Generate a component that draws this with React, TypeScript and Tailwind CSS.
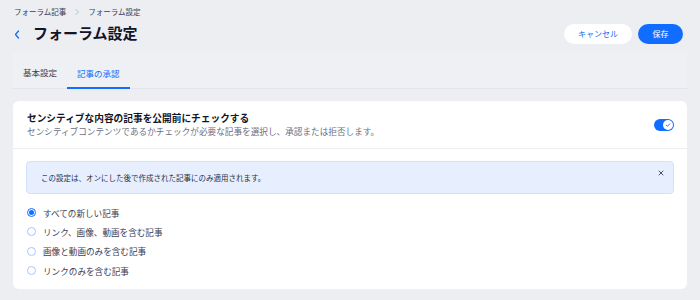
import React from 'react';

const options = [
  { label: 'すべての新しい記事', checked: true },
  { label: 'リンク、画像、動画を含む記事', checked: false },
  { label: '画像と動画のみを含む記事', checked: false },
  { label: 'リンクのみを含む記事', checked: false },
];

export default function App() {
  return (
    <div
      className="w-[700px] h-[300px] overflow-hidden bg-[#eceef2] text-[#1b2036]"
      style={{ fontFamily: '"Noto Sans CJK JP", "Noto Sans", sans-serif' }}
    >
      {/* breadcrumb */}
      <div className="flex items-center h-[10px] mt-[7px] pl-[14px] text-[7.5px] leading-[10px] text-[#3b4057]">
        <span>フォーラム記事</span>
        <svg width="6" height="8" viewBox="0 0 6 8" className="mx-[8px]">
          <path d="M1.5 1 L4.5 4 L1.5 7" fill="none" stroke="#b6bac6" strokeWidth="0.9" />
        </svg>
        <span>フォーラム設定</span>
      </div>

      {/* title row */}
      <div className="flex items-center justify-between h-[20px] mt-[7px] pl-[14px] pr-[17px]">
        <div className="flex items-center">
          <svg width="6" height="9" viewBox="0 0 6 9">
            <path d="M4.5 1 L1.5 4.5 L4.5 8" fill="none" stroke="#116dff" strokeWidth="1.3" strokeLinecap="round" strokeLinejoin="round" />
          </svg>
          <h1 className="ml-[13px] text-[15px] leading-[20px] font-bold text-[#111528] -mt-[2px]">フォーラム設定</h1>
        </div>
        <div className="flex items-center gap-[6px]">
          <button className="h-[20px] w-[68px] rounded-full bg-white text-[#116dff] text-[8px] leading-[20px]">キャンセル</button>
          <button className="h-[20px] w-[45px] rounded-full bg-[#116dff] text-white text-[8px] leading-[20px]">保存</button>
        </div>
      </div>

      {/* tabs */}
      <div className="mx-[13px] mt-[8px] h-[37px] flex items-end bg-[#eef0f4] border-b border-[#e1e4ea]">
        <div className="px-[10px] pb-[8px] text-[8.5px] leading-[12px] text-[#3b4057] border-b-2 border-transparent">基本設定</div>
        <div className="px-[10px] pb-[8px] text-[8.5px] leading-[12px] text-[#116dff] border-b-2 border-[#116dff] -mb-px">記事の承認</div>
      </div>

      {/* card */}
      <div className="mx-[13px] mt-[12px] bg-white rounded-[6px]">
        <div className="flex items-center justify-between pl-[14px] pr-[13px] pt-[11px] pb-[11px] border-b border-[#eceef2]">
          <div>
            <div className="text-[9.7px] leading-[12px] font-bold text-[#111528]">センシティブな内容の記事を公開前にチェックする</div>
            <div className="mt-[1px] text-[8.65px] leading-[12px] text-[#6b7083]">
              センシティブコンテンツであるかチェックが必要な記事を選択し、承認または拒否します。
            </div>
          </div>
          <div className="w-[20px] h-[12px] rounded-full bg-[#116dff] flex items-center justify-end pr-[1px]">
            <div className="w-[10px] h-[10px] rounded-full bg-white flex items-center justify-center">
              <svg width="6" height="6" viewBox="0 0 6 6">
                <path d="M1.2 3.2 L2.5 4.3 L4.8 1.8" fill="none" stroke="#116dff" strokeWidth="0.9" strokeLinecap="round" strokeLinejoin="round" />
              </svg>
            </div>
          </div>
        </div>

        <div className="px-[13px] pt-[12px] pb-[9px]">
          <div className="h-[33px] flex items-center justify-between pl-[14px] pr-[8px] rounded-[4px] bg-[#e7effe] border border-[#d2e1fd]">
            <span className="text-[7.5px] leading-[10px] text-[#2a2f44]">この設定は、オンにした後で作成された記事にのみ適用されます。</span>
            <svg width="8" height="8" viewBox="0 0 8 8" className="-mt-[10px]">
              <path d="M2 2 L6 6 M6 2 L2 6" stroke="#4a4f62" strokeWidth="1" strokeLinecap="round" />
            </svg>
          </div>

          <div className="mt-[9px] flex flex-col">
            {options.map((o) => (
              <label key={o.label} className="h-[19.3px] flex items-center">
                <span
                  className={
                    o.checked
                      ? 'w-[9px] h-[9px] rounded-full border border-[#116dff] flex items-center justify-center ml-[0.5px]'
                      : 'w-[9px] h-[9px] rounded-full border border-[#a9c6fb] ml-[0.5px]'
                  }
                >
                  {o.checked && <span className="w-[5px] h-[5px] rounded-full bg-[#116dff]" />}
                </span>
                <span className="ml-[7.5px] text-[8.6px] leading-[12px] text-[#3b4057]">{o.label}</span>
              </label>
            ))}
          </div>
        </div>
      </div>
    </div>
  );
}
